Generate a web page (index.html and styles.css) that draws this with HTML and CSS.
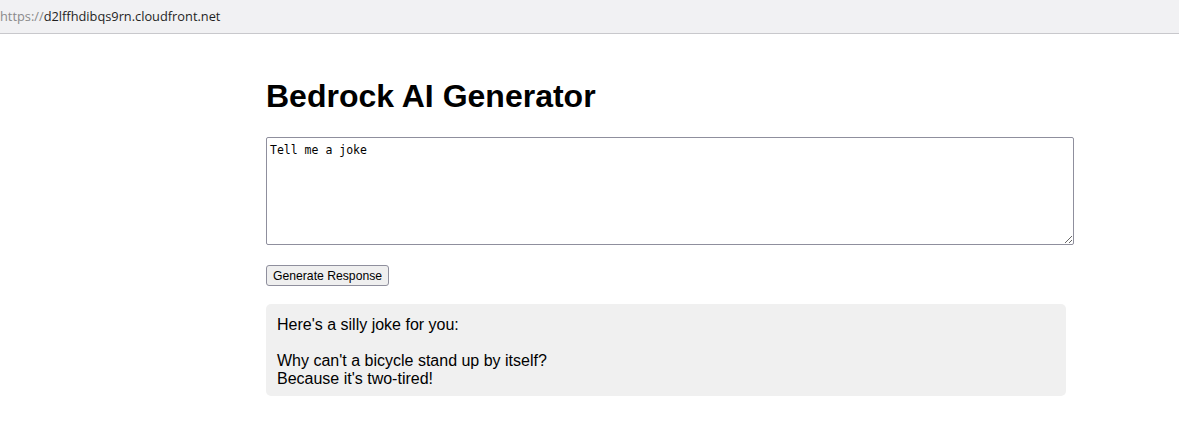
FILE: index.html
```html
<!DOCTYPE html>
<html>
<head>
<meta charset="utf-8">
<title>Bedrock AI Generator</title>
<link rel="stylesheet" href="styles.css">
</head>
<body>
<div class="topbar"><span class="scheme">https://</span><span class="host">d2lffhdibqs9rn.cloudfront.net</span></div>
<main class="page">
  <h1 class="title">Bedrock AI Generator</h1>
  <textarea class="prompt">Tell me a joke</textarea>
  <button class="generate">Generate Response</button>
  <div class="result">Here's a silly joke for you:

Why can't a bicycle stand up by itself?
Because it's two-tired!</div>
</main>
</body>
</html>
```
FILE: styles.css
```css
html, body {
  margin: 0;
  padding: 0;
  background: #ffffff;
}
.topbar {
  height: 34px;
  box-sizing: border-box;
  background: #f1f1f3;
  border-bottom: 1px solid #c8c8cc;
  font-family: "Open Sans", "Noto Sans", sans-serif;
  font-size: 12.8px;
  line-height: 32px;
  padding-left: 0;
  white-space: nowrap;
  overflow: hidden;
}
.scheme { color: #8a8a8a; }
.host { color: #1f1f1f; }
.page {
  display: flex;
  flex-direction: column;
  align-items: flex-start;
  padding: 44px 0 0 266px;
  font-family: "Liberation Sans", Arial, sans-serif;
}
.title {
  margin: 0 0 22px;
  font-size: 32px;
  font-weight: bold;
  line-height: 37px;
  color: #000;
}
.prompt {
  display: block;
  width: 808px;
  height: 108px;
  box-sizing: border-box;
  border: 1px solid #8f8f9d;
  border-radius: 2px;
  padding: 5px 3px;
  font-family: "DejaVu Sans Mono", "Liberation Mono", monospace;
  font-size: 11.5px;
  line-height: 15px;
  color: #000;
  resize: vertical;
  margin: 0;
}
.generate {
  margin: 20px 0 0;
  height: 21px;
  padding: 1px 6px;
  font-family: "Liberation Sans", Arial, sans-serif;
  font-size: 12.2px;
  color: #000;
  background: #efefef;
  border: 1px solid #8f8f9d;
  border-radius: 3px;
}
.result {
  margin-top: 18px;
  width: 800px;
  box-sizing: border-box;
  background: #f0f0f0;
  border-radius: 5px;
  padding: 12px 11px 8px;
  font-size: 16px;
  line-height: 18px;
  white-space: pre-wrap;
  color: #000;
}
```
